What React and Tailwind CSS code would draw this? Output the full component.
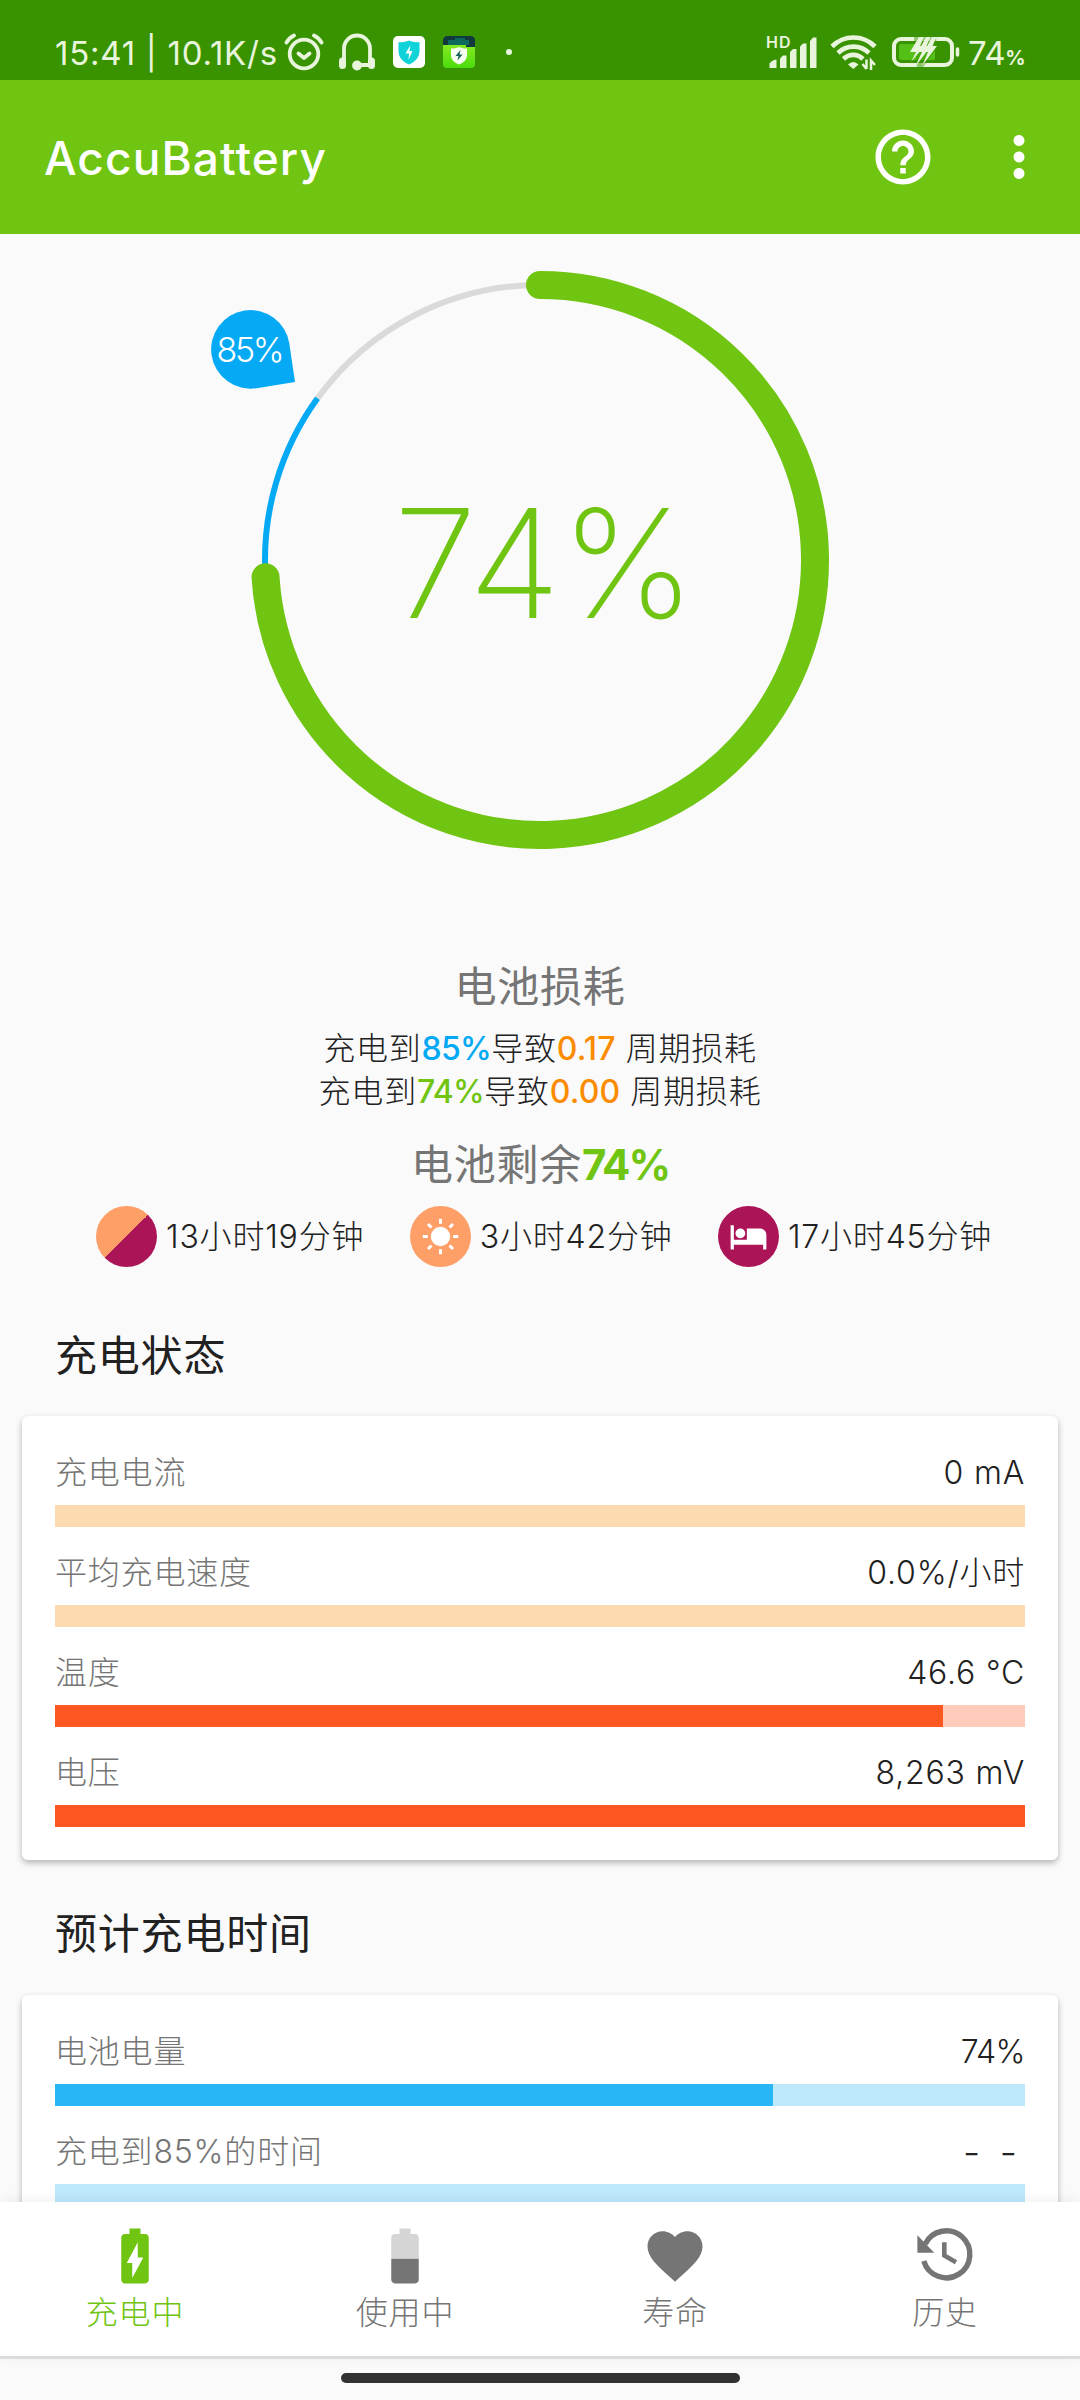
import { MdHelpOutline, MdMoreVert, MdFavorite, MdHotel, MdBatteryChargingFull } from 'react-icons/md';

const CHARGE = 74;
const TARGET = 85;

const STATUS_ROWS = [
  { label: '充电电流', value: '0 mA', pct: 0, bar: 'bg-[#ff9800]', track: 'bg-[#fddbb0]' },
  { label: '平均充电速度', value: '0.0%/小时', pct: 0, bar: 'bg-[#ff9800]', track: 'bg-[#fddbb0]' },
  { label: '温度', value: '46.6 °C', pct: 91.55, bar: 'bg-[#ff5722]', track: 'bg-[#ffcbbb]' },
  { label: '电压', value: '8,263 mV', pct: 100, bar: 'bg-[#ff5722]', track: 'bg-[#ffcbbb]' },
];

const TIME_ROWS = [
  { label: '电池电量', value: '74%', valueClass: 'tracking-[-0.600px]', pct: CHARGE, bar: 'bg-[#29b6f6]', track: 'bg-[#bee8fc]' },
  { label: '充电到85%的时间', value: '- -', valueClass: 'pr-[8px] text-[38px] [word-spacing:9px]', pct: 0, bar: 'bg-[#29b6f6]', track: 'bg-[#bee8fc]' },
];

function polar(pct, r) {
  const a = (pct / 100) * 2 * Math.PI;
  return [540 + r * Math.sin(a), 326 - r * Math.cos(a)];
}

function arc(from, to, r) {
  const [x1, y1] = polar(from, r);
  const [x2, y2] = polar(to, r);
  return `M${x1} ${y1}A${r} ${r} 0 ${to - from > 50 ? 1 : 0} 1 ${x2} ${y2}`;
}

function AlarmIcon() {
  return (
    <svg className="w-[40px] h-[38px]" viewBox="0 0 40 38" fill="none" stroke="currentColor" strokeWidth="3.8" strokeLinecap="round" strokeLinejoin="round">
      <circle cx="20" cy="21" r="14.3" />
      <path d="M14.500 20.500l5.500 4.500 5.500-4.500" />
      <path d="M2.500 9.500Q5 5 10 2.500M37.500 9.500Q35 5 30 2.500" />
    </svg>
  );
}

function HeadsetIcon() {
  return (
    <svg className="w-[38px] h-[38px]" viewBox="0 0 38 38" fill="none" stroke="currentColor" strokeWidth="3.8" strokeLinecap="round">
      <path d="M6 28V15.500a13 13 0 0 1 26 0V28" />
      <path d="M20 32h11" />
      <path d="M4.500 28v4.500M33.500 28v4.500" strokeWidth="7" />
      <circle cx="19" cy="32.500" r="3" fill="currentColor" />
    </svg>
  );
}

function ShieldTile() {
  return (
    <svg className="w-[32px] h-[32px]" viewBox="0 0 32 32">
      <rect width="32" height="32" rx="5" fill="#fff" />
      <path d="M16 4.500c4 1.500 7 1.800 10.500 1.800V15c0 6.500-4.500 11-10.500 13.500C10 26 5.500 21.500 5.500 15V6.300C9 6.300 12 6 16 4.500z" fill="#0fd3d8" />
      <path d="M17.500 9l-5 8.500h3.500l-.5 6.500 4-9h-3z" fill="#fff" />
    </svg>
  );
}

function GreenTile() {
  return (
    <svg className="w-[32px] h-[32px]" viewBox="0 0 32 32">
      <defs>
        <linearGradient id="tile" x1="0" y1="0" x2="0" y2="1">
          <stop offset="0" stopColor="#9af02a" />
          <stop offset="1" stopColor="#4bdc0c" />
        </linearGradient>
      </defs>
      <rect width="32" height="32" rx="4" fill="url(#tile)" />
      <path d="M0 9V4a4 4 0 0 1 4-4h24a4 4 0 0 1 4 4v7h-9V9z" fill="#103a3c" />
      <path d="M5 4h7V2h10v2h4v5H5z" fill="#0e6a5c" />
      <path d="M16 11c3 1.300 5 1.500 8 1.500v6.500c0 4.500-3.500 8-8 9.500-4.500-1.500-8-5-8-9.500v-6.500c3 0 5-.2 8-1.500z" fill="#f6fff0" />
      <path d="M17.500 14l-5 6h3l-1 4.500 5-6h-3z" fill="#17615c" />
    </svg>
  );
}

function SignalIcon() {
  return (
    <svg className="w-[50px] h-[34px] overflow-visible" viewBox="0 0 50 34" fill="currentColor">
      <text x="-1" y="13" fontSize="16" fontWeight="600" textLength="24.500">HD</text>
      <path d="M2.500 33v-4.500Q5 25 9.500 24.500V33z" />
      <path d="M13 33V23.500l3-3h3.500V33z" />
      <path d="M23 33V17l3-3h3.500v19z" />
      <path d="M33 33V11.500l3-3h3.500V33z" />
      <path d="M43 33V6l3-3.500h3.500V33z" />
    </svg>
  );
}

function WifiIcon() {
  return (
    <svg className="w-[47px] h-[36px]" viewBox="0 0 47 36" fill="none" stroke="currentColor" strokeWidth="4.600">
      <path d="M2 12.500C14 .5 33 .5 45 12.500" />
      <path d="M8 19c8.500-8.500 22.500-8.500 31 0" />
      <path d="M13.500 25c5.500-5.500 14-5.500 19.500 0" />
      <path d="M18 30.500Q23.300 25.500 28.500 30.500L23.300 35z" fill="currentColor" stroke="none" />
      <path d="M36.500 25.500V35M36.500 35L32.500 30M41 36v-9.500l4 4.500" strokeWidth="2.500" />
    </svg>
  );
}

function StatusBatteryIcon() {
  return (
    <svg className="w-[70px] h-[32px]" viewBox="0 0 70 32">
      <rect x="3" y="3" width="58" height="26" rx="7" fill="none" stroke="currentColor" strokeWidth="4" />
      <path d="M66.500 13v6" stroke="currentColor" strokeWidth="3.500" strokeLinecap="round" />
      <rect x="8" y="8" width="36" height="16" rx="2" fill="#53bf17" />
      <path d="M23 1h22l1 11-14 19h-6z" fill="#399300" opacity=".5" />
      <path d="M28 1h5l-4 9h4.500L20 26l5-10h-6z" fill="currentColor" />
      <path d="M35 1h4.500l-4 9h4.500L24 31l7-15h-4z" fill="currentColor" />
      <path d="M41 1h4.500l-4 9h4.500L31 30l6-14h-4z" fill="currentColor" />
    </svg>
  );
}

function StatusBar() {
  return (
    <div className="h-[80px] bg-[#399300] text-[#e8f5dc] flex pt-[33px] pl-[55px] pr-[55px]">
      <span className="w-[229px] text-[33px] leading-[40px] tracking-[0.750px] whitespace-nowrap">15:41 | 10.1K/s</span>
      <AlarmIcon />
      <span className="ml-[14px]"><HeadsetIcon /></span>
      <span className="ml-[17px] pt-[3px]"><ShieldTile /></span>
      <span className="ml-[18px] pt-[3px]"><GreenTile /></span>
      <span className="ml-[31px] mt-[16px] w-[6px] h-[6px] rounded-full bg-[#e8f5dc]" />
      <div className="ml-auto flex">
        <span className="pt-[2px]"><SignalIcon /></span>
        <span className="ml-[13px] pt-[1px]"><WifiIcon /></span>
        <span className="ml-[14px] pt-[3px]"><StatusBatteryIcon /></span>
        <span className="ml-[7px] text-[33px] leading-[40px] tracking-[-0.500px]">
          74<span className="text-[20px] font-bold">%</span>
        </span>
      </div>
    </div>
  );
}

function Header() {
  return (
    <div className="h-[154px] bg-[#70c412] text-white flex items-center pl-[44px] pr-[28px]">
      <h1 className="text-[46px] leading-[56px] tracking-[1.100px] font-medium pt-[2px]">AccuBattery</h1>
      <MdHelpOutline className="ml-auto size-[66px]" />
      <MdMoreVert className="ml-[50px] size-[66px]" />
    </div>
  );
}

function Dial() {
  return (
    <svg className="block w-[1080px] h-[725px]" viewBox="0 0 1080 725">
      <path d={arc(TARGET, 100, 275)} fill="none" stroke="#dadada" strokeWidth="6" />
      <path d={arc(CHARGE, TARGET, 275)} fill="none" stroke="#05a9f4" strokeWidth="6" />
      <path d={arc(0, CHARGE, 275)} fill="none" stroke="#70c412" strokeWidth="28" strokeLinecap="round" />
      <path d="M295 148L289.300 109.400A39.300 39.300 0 1 0 256.500 154.200z" fill="#05a9f4" />
      <text x="250.500" y="128" textAnchor="middle" fontSize="34" fill="#fff" textLength="68" className="font-light">85%</text>
      <text x="544.500" y="384" textAnchor="middle" fontSize="151" fill="#70c412" className="font-extralight">74%</text>
    </svg>
  );
}

function Wear({ pct, color, cycles }) {
  return (
    <p className="text-[32px] leading-[43px] tracking-[0.800px] font-light text-[#212121] whitespace-pre">
      充电到<span className={`font-medium tracking-[-0.700px] ${color}`}>{pct}</span>导致
      <span className="font-medium tracking-[0.200px] text-[#fb8c00]">{cycles}</span> 周期损耗
    </p>
  );
}

function Remaining({ icon, text }) {
  return (
    <div className="flex items-center">
      {icon}
      <span className="ml-[9px] pt-[1px] text-[32px] leading-[46px] tracking-[0.800px] font-light text-[#212121] whitespace-nowrap">{text}</span>
    </div>
  );
}

function SunBadge() {
  return (
    <svg className="size-[61px]" viewBox="0 0 61 61">
      <circle cx="30.500" cy="30.500" r="30.500" fill="#ff9f68" />
      <circle cx="30.500" cy="30.500" r="9.700" fill="#fff" />
      {[0, 45, 90, 135, 180, 225, 270, 315].map((a) => (
        <path key={a} d="M30.500 12.800v5" stroke="#fff" strokeWidth="3" transform={`rotate(${a} 30.5 30.5)`} />
      ))}
    </svg>
  );
}

function Meter({ label, value, valueClass = 'tracking-[0.800px]', pct, bar, track }) {
  return (
    <div>
      <div className="h-[56px] flex justify-between text-[32px] leading-[48px] font-light">
        <span className="tracking-[0.800px] text-[#757575]">{label}</span>
        <span className={`text-[#212121] ${valueClass}`}>{value}</span>
      </div>
      <div className={`h-[22px] ${track}`}>
        <div className={`h-full ${bar}`} style={{ width: `${pct}%` }} />
      </div>
    </div>
  );
}

function Card({ rows }) {
  return (
    <div className="mx-[22px] p-[33px] flex flex-col gap-[22px] bg-white rounded-[6px] shadow-[0_3px_6px_rgba(0,0,0,0.28)]">
      {rows.map((row) => (
        <Meter key={row.label} {...row} />
      ))}
    </div>
  );
}

function BatteryHalfIcon() {
  return (
    <svg className="size-[66px]" viewBox="0 0 24 24" fill="currentColor">
      <path fillOpacity=".3" d="M17 5.330C17 4.600 16.400 4 15.670 4H14V2h-4v2H8.330C7.600 4 7 4.600 7 5.330V13h10V5.330z" />
      <path d="M7 13v7.670C7 21.400 7.600 22 8.330 22h7.330c.74 0 1.340-.6 1.340-1.330V13H7z" />
    </svg>
  );
}

function HistoryIcon() {
  return (
    <svg className="size-[66px]" viewBox="0 0 66 66" fill="none" stroke="currentColor" strokeWidth="5.400">
      <path d="M11.800 38A23.500 23.500 0 1 0 13.200 21" />
      <path d="M5.400 12.300v17.400h16.900z" fill="currentColor" stroke="none" />
      <path d="M32.300 19.300V32.500L44 39.300" strokeWidth="4.600" />
    </svg>
  );
}

function Tab({ icon, label, active }) {
  return (
    <div className={`flex-1 flex flex-col items-center pt-[21px] ${active ? 'text-[#70c412]' : 'text-[#757575]'}`}>
      {icon}
      <span className="mt-[1px] text-[32px] leading-[46px] tracking-[0.800px] font-light">{label}</span>
    </div>
  );
}

export default function App() {
  return (
    <div className="w-[1080px] h-[2400px] overflow-hidden flex flex-col bg-[#fafafa] font-['Inter','Noto_Sans_CJK_SC',sans-serif]">
      <StatusBar />
      <Header />

      <main className="h-[1968px] overflow-hidden">
        <Dial />

        <div className="text-center">
          <h2 className="text-[42px] leading-[56px] tracking-[0.800px] text-[#757575]">电池损耗</h2>
          <div className="mt-[12px]">
            <Wear pct="85%" color="text-[#03a9f4]" cycles="0.17" />
            <Wear pct="74%" color="text-[#70c412]" cycles="0.00" />
          </div>
          <h2 className="mt-[24px] text-[42px] leading-[56px] tracking-[0.800px] text-[#757575]">
            电池剩余<span className="font-bold tracking-[-2px] text-[#70c412]">74%</span>
          </h2>
        </div>

        <div className="mt-[13px] h-[61px] pl-[96px] pr-[88px] flex justify-between">
          <Remaining
            icon={<span className="size-[61px] rounded-full bg-[linear-gradient(135deg,#ff9f68_50%,#ab1457_50%)]" />}
            text="13小时19分钟"
          />
          <Remaining icon={<SunBadge />} text="3小时42分钟" />
          <Remaining
            icon={
              <span className="size-[61px] rounded-full bg-[#ab1457] text-white flex items-center justify-center">
                <MdHotel className="size-[39px]" />
              </span>
            }
            text="17小时45分钟"
          />
        </div>

        <h2 className="mt-[61px] mb-[32px] pl-[55px] text-[42px] leading-[56px] tracking-[0.800px] text-[#212121]">充电状态</h2>
        <Card rows={STATUS_ROWS} />

        <h2 className="mt-[46px] mb-[33px] pl-[55px] text-[42px] leading-[56px] tracking-[0.800px] text-[#212121]">预计充电时间</h2>
        <Card rows={TIME_ROWS} />
      </main>

      <nav className="relative h-[157px] bg-white border-b-[3px] border-[#dcdcdc] flex shadow-[0_-2px_12px_rgba(0,0,0,0.060)]">
        <Tab active icon={<MdBatteryChargingFull className="size-[66px]" />} label="充电中" />
        <Tab icon={<BatteryHalfIcon />} label="使用中" />
        <Tab icon={<MdFavorite className="size-[66px]" />} label="寿命" />
        <Tab icon={<HistoryIcon />} label="历史" />
      </nav>
      <div className="h-[41px] pt-[14px] flex justify-center">
        <div className="w-[399px] h-[10px] rounded-full bg-[#323232]" />
      </div>
    </div>
  );
}
